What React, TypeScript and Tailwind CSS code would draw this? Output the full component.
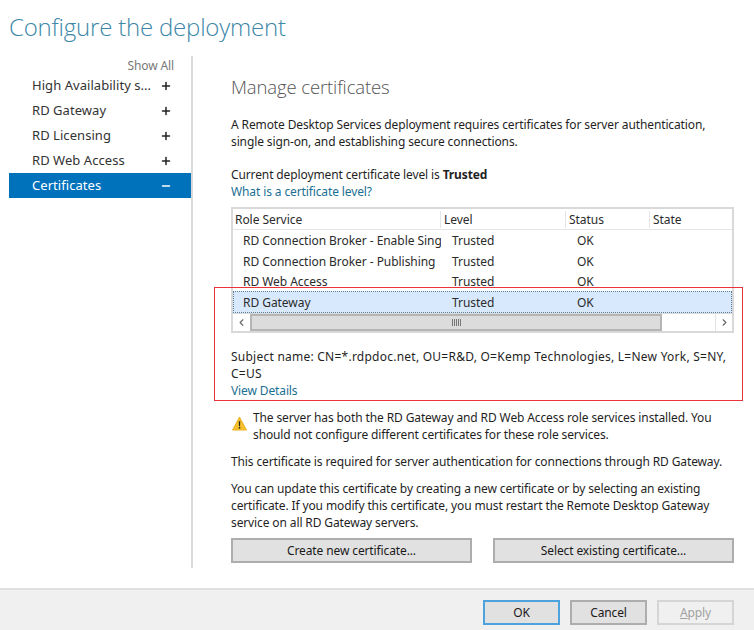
import { ChevronLeft, ChevronRight, Minus, Plus } from 'lucide-react';

const navItems = ['High Availability s...', 'RD Gateway', 'RD Licensing', 'RD Web Access'];

const rows = [
  { name: 'RD Connection Broker - Enable Sing', height: 'h-[21px]' },
  { name: 'RD Connection Broker - Publishing', height: 'h-[20px]' },
  { name: 'RD Web Access', height: 'h-[20px]' },
];

function Cell({ children, width, pad }: { children?: React.ReactNode; width: string; pad: string }) {
  return <div className={`${width} ${pad} shrink-0 overflow-hidden whitespace-nowrap`}>{children}</div>;
}

function RowCells({ name }: { name: string }) {
  return (
    <>
      <Cell width="w-[208px]" pad="pl-[10px]">{name}</Cell>
      <Cell width="w-[125px]" pad="pl-[11px]">Trusted</Cell>
      <Cell width="w-[84px]" pad="pl-[11px]">OK</Cell>
    </>
  );
}

function ActionButton({ label, className }: { label: string; className: string }) {
  return (
    <button type="button" className={`h-[25px] border-2 border-[#adadad] bg-[#e1e1e1] text-center text-[#1a1a1a] ${className}`}>
      {label}
    </button>
  );
}

export default function App() {
  return (
    <div className="relative flex h-[630px] w-[754px] flex-col overflow-hidden bg-white font-['Noto_Sans',sans-serif] text-[12px] leading-[17px] tracking-[-0.12px] text-[#1f1f1f]">
      <h1 className="h-[56px] pl-[9px] pt-[8px] font-['Open_Sans',sans-serif] text-[24px] font-light leading-[38px] tracking-[-0.2px] text-[#3c87a8]">Configure the deployment</h1>

      <div className="flex h-[532px]">
        <aside className="w-[193px] shrink-0 pb-[20px] pl-[9px]">
          <div className="flex h-full flex-col border-r-2 border-[#d9d9d9]">
            <div className="h-[17px] pt-[1px] pr-[17px] text-right leading-[17px] text-[#777]">Show All</div>
            <div className="text-[13px] tracking-[0.05px]">
              {navItems.map((item) => (
                <div key={item} className="flex h-[25px] items-center justify-between pl-[23px] pr-[19px] text-[#333]">
                  <span>{item}</span>
                  <Plus size={12} strokeWidth={3} className="text-[#222]" />
                </div>
              ))}
              <div className="flex h-[25px] items-center justify-between bg-[#0072bc] pl-[23px] pr-[19px] text-white">
                <span>Certificates</span>
                <Minus size={12} strokeWidth={3} />
              </div>
            </div>
          </div>
        </aside>

        <main className="flex-1 pl-[38px] pr-[20px]">
          <h2 className="h-[50px] pt-[16px] font-['Open_Sans',sans-serif] text-[18.5px] font-light leading-[30px] text-[#555]">Manage certificates</h2>
          <p className="mt-[10px]">A Remote Desktop Services deployment requires certificates for server authentication, single sign-on, and establishing secure connections.</p>
          <p className="mt-[16px]">Current deployment certificate level is <span className="font-bold">Trusted</span></p>
          <a className="block text-[#1a6f94]">What is a certificate level?</a>

          <div className="mt-[7px] border-2 border-[#d9d9d9] tracking-[-0.05px] text-[#2b2b2b]">
            <div className="flex h-[21px] items-center border-b border-[#e5e5e5]">
              <div className="w-[208px] shrink-0 border-r border-[#e5e5e5] pl-[2px]">Role Service</div>
              <div className="w-[125px] shrink-0 border-r border-[#e5e5e5] pl-[3px]">Level</div>
              <div className="w-[84px] shrink-0 border-r border-[#e5e5e5] pl-[3px]">Status</div>
              <div className="flex-1 pl-[3px]">State</div>
            </div>
            {rows.map((row) => (
              <div key={row.name} className={`flex items-center ${row.height}`}>
                <RowCells name={row.name} />
              </div>
            ))}
            <div className="flex h-[22px] items-center bg-[#d9e9fd] outline-1 -outline-offset-1 outline-[#5f7d9c] outline-dotted">
              <RowCells name="RD Gateway" />
            </div>
            <div className="flex h-[18px] items-stretch border-t border-[#d9d9d9] bg-white">
              <div className="flex w-[17px] items-center justify-center text-[#666]"><ChevronLeft size={11} strokeWidth={2.5} /></div>
              <div className="flex w-[412px] items-center justify-center border-2 border-[#b5b5b5] bg-[#dcdcdc]">
                <span className="h-[7px] w-[9px] bg-[repeating-linear-gradient(90deg,#777_0_1px,transparent_1px_2px)]" />
              </div>
              <div className="flex-1" />
              <div className="flex w-[17px] items-center justify-center border-l border-[#e5e5e5] text-[#666]"><ChevronRight size={11} strokeWidth={2.5} /></div>
            </div>
          </div>

          <p className="mt-[15px] tracking-[0.24px]">Subject name: CN=*.rdpdoc.net, OU=R&amp;D, O=Kemp Technologies, L=New York, S=NY,<br />C=US</p>
          <a className="block text-[#1a6f94]">View Details</a>

          <div className="mt-[10px] flex gap-[6px] pl-[1px]">
            <svg viewBox="0 0 16 16" className="mt-[7px] h-[15px] w-[15px] shrink-0">
              <path d="M8 1 15.5 15H.5z" fill="#f5c02c" stroke="#e8a90f" strokeWidth="0.8" strokeLinejoin="round" />
              <path d="M7.2 5.5h1.6l-.3 5.5h-1z" fill="#222" />
              <rect x="7.2" y="11.8" width="1.6" height="1.6" fill="#222" />
            </svg>
            <p>The server has both the RD Gateway and RD Web Access role services installed. You should not configure different certificates for these role services.</p>
          </div>
          <p className="mt-[10px]">This certificate is required for server authentication for connections through RD Gateway.</p>
          <p className="mt-[10px]">You can update this certificate by creating a new certificate or by selecting an existing certificate. If you modify this certificate, you must restart the Remote Desktop Gateway service on all RD Gateway servers.</p>
          <div className="mt-[7px] flex justify-between">
            <ActionButton label="Create new certificate..." className="w-[241px]" />
            <ActionButton label="Select existing certificate..." className="w-[241px]" />
          </div>
        </main>
      </div>

      <footer className="flex h-[42px] items-start justify-end gap-[10px] border-t-2 border-[#dfdfdf] bg-[#f0f0f0] pr-[20px] pt-[10px]">
        <ActionButton label="OK" className="w-[77px] !border-[#4fa3dc]" />
        <ActionButton label="Cancel" className="w-[77px]" />
        <button type="button" className="h-[25px] w-[77px] border-2 border-[#d5d5d5] text-[#a0a0a0]"><span className="underline">A</span>pply</button>
      </footer>

      <div className="pointer-events-none absolute left-[214px] top-[287px] h-[114px] w-[529px] border border-[#e8323c]" />
    </div>
  );
}
